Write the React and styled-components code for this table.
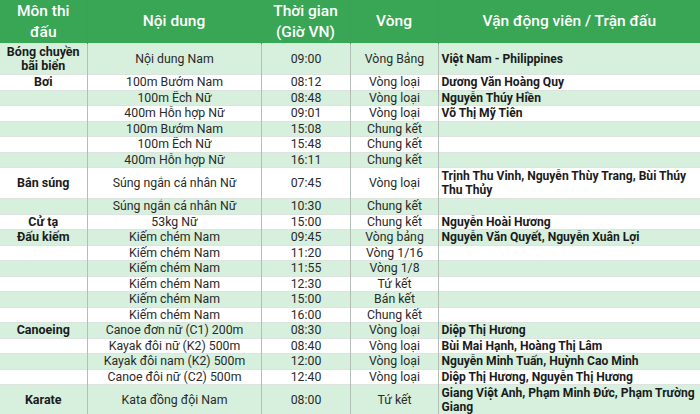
import React from 'react';
import styled, { createGlobalStyle } from 'styled-components';

const GlobalStyle = createGlobalStyle`
  html, body {
    margin: 0;
    padding: 0;
    background: #fff;
    overflow: hidden;
  }
  body {
    font-family: Roboto, "Noto Sans", "Liberation Sans", sans-serif;
  }
`;

const Table = styled.table`
  width: 700px;
  table-layout: fixed;
  border-collapse: collapse;
  color: #222;
`;

const HeadCell = styled.th`
  height: 43px;
  padding: 0 2px;
  background: #38a654;
  color: #fff;
  font-size: 15.5px;
  font-weight: 500;
  line-height: 21px;
  text-align: center;
  vertical-align: middle;
  border-left: 1px solid #3aa255;
  &:first-child {
    border-left: none;
  }
`;

const Row = styled.tr`
  height: ${p => (p.$tall ? '31px' : '15.5px')};
  background: ${p => (p.$striped ? '#d6f0dd' : '#ffffff')};
`;

const Cell = styled.td`
  padding: 0 2px 0 3px;
  font-size: 12.3px;
  line-height: 14px;
  text-align: center;
  color: #2a2a2a;
  vertical-align: middle;
  border-left: 1px solid #b3beb6;
  border-top: 1px solid #dde3de;
  white-space: nowrap;
  overflow: hidden;
  &:first-child {
    border-left: none;
  }
`;

const SportCell = styled(Cell)`
  white-space: normal;
  padding: 0 2px;
  font-size: 12.5px;
  font-weight: 700;
  color: #1b1b1b;
`;

const NameCell = styled(Cell)`
  text-align: left;
  white-space: normal;
  padding: 0 0 0 3px;
  font-size: 12.1px;
  font-weight: 700;
  color: #1b1b1b;
`;

const rows = [
  { sport: 'Bóng chuyền bãi biển', event: 'Nội dung Nam', time: '09:00', round: 'Vòng Bảng', who: 'Việt Nam - Philippines', tall: true },
  { sport: 'Bơi', event: '100m Bướm Nam', time: '08:12', round: 'Vòng loại', who: 'Dương Văn Hoàng Quy' },
  { event: '100m Ếch Nữ', time: '08:48', round: 'Vòng loại', who: 'Nguyễn Thúy Hiền' },
  { event: '400m Hỗn hợp Nữ', time: '09:01', round: 'Vòng loại', who: 'Võ Thị Mỹ Tiên' },
  { event: '100m Bướm Nam', time: '15:08', round: 'Chung kết' },
  { event: '100m Ếch Nữ', time: '15:48', round: 'Chung kết' },
  { event: '400m Hỗn hợp Nữ', time: '16:11', round: 'Chung kết' },
  { sport: 'Bắn súng', event: 'Súng ngắn cá nhân Nữ', time: '07:45', round: 'Vòng loại', who: 'Trịnh Thu Vinh, Nguyễn Thùy Trang, Bùi Thúy Thu Thủy', tall: true },
  { event: 'Súng ngắn cá nhân Nữ', time: '10:30', round: 'Chung kết' },
  { sport: 'Cử tạ', event: '53kg Nữ', time: '15:00', round: 'Chung kết', who: 'Nguyễn Hoài Hương' },
  { sport: 'Đấu kiếm', event: 'Kiếm chém Nam', time: '09:45', round: 'Vòng bảng', who: 'Nguyễn Văn Quyết, Nguyễn Xuân Lợi' },
  { event: 'Kiếm chém Nam', time: '11:20', round: 'Vòng 1/16' },
  { event: 'Kiếm chém Nam', time: '11:55', round: 'Vòng 1/8' },
  { event: 'Kiếm chém Nam', time: '12:30', round: 'Tứ kết' },
  { event: 'Kiếm chém Nam', time: '15:00', round: 'Bán kết' },
  { event: 'Kiếm chém Nam', time: '16:00', round: 'Chung kết' },
  { sport: 'Canoeing', event: 'Canoe đơn nữ (C1) 200m', time: '08:30', round: 'Vòng loại', who: 'Diệp Thị Hương' },
  { event: 'Kayak đôi nữ (K2) 500m', time: '08:40', round: 'Vòng loại', who: 'Bùi Mai Hạnh, Hoàng Thị Lâm' },
  { event: 'Kayak đôi nam (K2) 500m', time: '12:00', round: 'Vòng loại', who: 'Nguyễn Minh Tuấn, Huỳnh Cao Minh' },
  { event: 'Canoe đôi nữ (C2) 500m', time: '12:40', round: 'Vòng loại', who: 'Diệp Thị Hương, Nguyễn Thị Hương' },
  { sport: 'Karate', event: 'Kata đồng đội Nam', time: '08:00', round: 'Tứ kết', who: 'Giang Việt Anh, Phạm Minh Đức, Phạm Trường Giang', tall: true },
];

export default function App() {
  return (
    <>
      <GlobalStyle />
      <Table>
        <colgroup>
          <col style={{ width: 87 }} />
          <col style={{ width: 174 }} />
          <col style={{ width: 89 }} />
          <col style={{ width: 88 }} />
          <col style={{ width: 262 }} />
        </colgroup>
        <thead>
          <tr>
            <HeadCell>Môn thi<br />đấu</HeadCell>
            <HeadCell>Nội dung</HeadCell>
            <HeadCell>Thời gian<br />(Giờ VN)</HeadCell>
            <HeadCell>Vòng</HeadCell>
            <HeadCell>Vận động viên / Trận đấu</HeadCell>
          </tr>
        </thead>
        <tbody>
          {rows.map((r, i) => (
            <Row key={i} $tall={r.tall} $striped={i % 2 === 0}>
              <SportCell>{r.sport || ''}</SportCell>
              <Cell>{r.event}</Cell>
              <Cell>{r.time}</Cell>
              <Cell>{r.round}</Cell>
              <NameCell>{r.who || ''}</NameCell>
            </Row>
          ))}
        </tbody>
      </Table>
    </>
  );
}
